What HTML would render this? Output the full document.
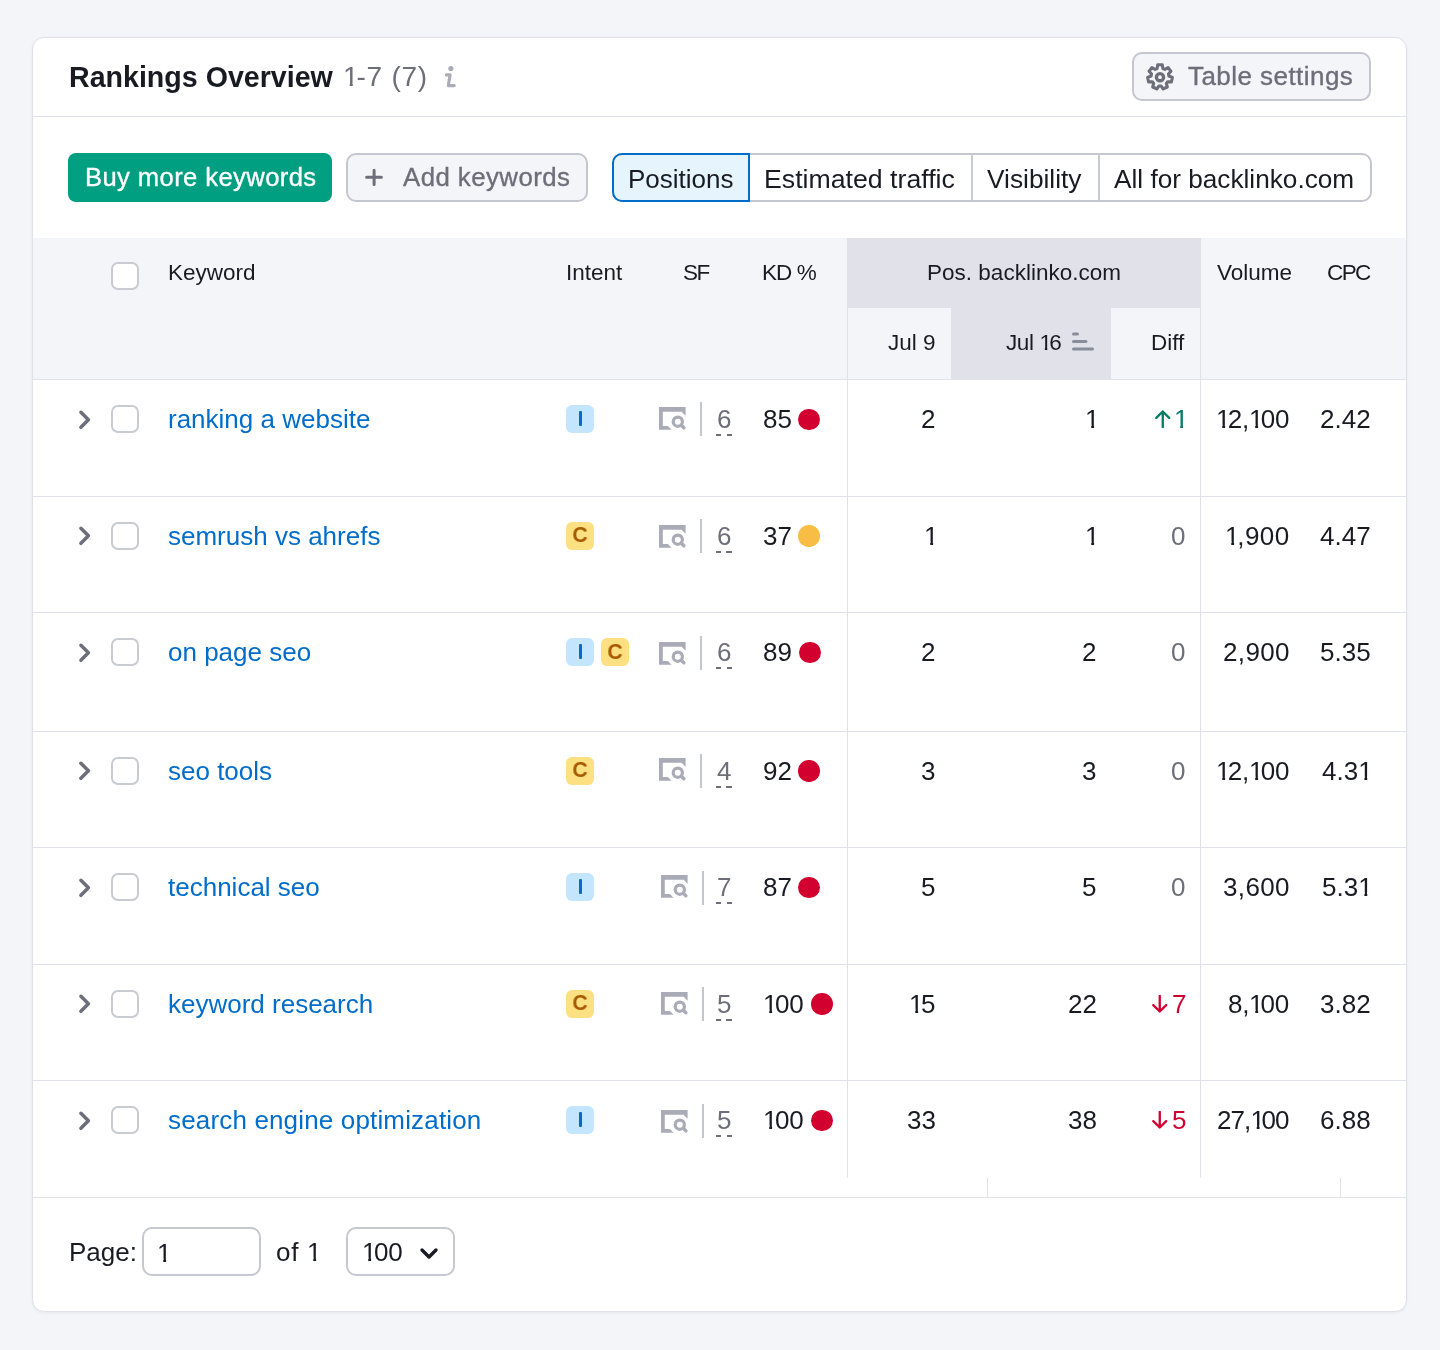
<!DOCTYPE html>
<html><head><meta charset="utf-8"><title>Rankings Overview</title>
<style>
html,body{margin:0;padding:0;}
body{width:1440px;height:1350px;background:#f4f5f9;position:relative;overflow:hidden;font-family:"Liberation Sans",sans-serif;}
.t{position:absolute;white-space:nowrap;will-change:transform;}
.b{position:absolute;}
.o{display:inline-block;margin-right:-0.1em;clip-path:polygon(-1em -1em,2em -1em,2em 0.70em,0.35em 0.70em,0.35em 2em,0.24em 2em,0.24em 0.70em,-1em 0.70em);}
</style></head><body>
<div class="b" style="left:32px;top:37px;width:1375px;height:1275px;background:#fff;border:1px solid #e0e1e9;border-radius:12px;box-sizing:border-box;box-shadow:0 1px 3px rgba(25,27,35,0.06);"></div>
<div class="t" style="left:69.00px;top:62.78px;font-size:28.6px;line-height:28.6px;color:#191b23;font-weight:700;">Rankings Overview</div>
<div class="t" style="left:343.00px;top:63.29px;font-size:28px;line-height:28px;color:#6c6e79;letter-spacing:0.75px;"><span class="o">1</span>-7 (7)</div>
<svg class="b" style="left:443px;top:64px" width="16" height="26" viewBox="0 0 16 26"><circle cx="7.9" cy="4.5" r="2.6" fill="#a9abb6"/><path d="M3.4 10.9 H7.1 L5.3 21.6 H11.2" fill="none" stroke="#a9abb6" stroke-width="3.1" stroke-linejoin="round" stroke-linecap="round"/></svg>
<div class="b" style="left:1132px;top:52px;width:239px;height:49px;background:#f4f5f9;border:2px solid #c4c7cf;border-radius:10px;box-sizing:border-box;"></div>
<svg class="b" style="left:1145.3px;top:61.7px" width="30" height="30" viewBox="0 0 30 30"><path d="M12.07 6.49 L12.74 2.81 L17.26 2.81 L17.93 6.49 L19.83 7.40 L23.12 5.63 L25.94 9.16 L23.48 11.99 L23.95 14.04 L27.39 15.51 L26.38 19.92 L22.64 19.75 L21.33 21.40 L22.33 25.00 L18.25 26.97 L16.05 23.94 L13.95 23.94 L11.75 26.97 L7.67 25.00 L8.67 21.40 L7.36 19.75 L3.62 19.92 L2.61 15.51 L6.05 14.04 L6.52 11.99 L4.06 9.16 L6.88 5.63 L10.17 7.40 Z" fill="none" stroke="#6c6e79" stroke-width="3.1" stroke-linejoin="round"/><circle cx="15" cy="15.2" r="3.6" fill="none" stroke="#6c6e79" stroke-width="3.4"/></svg>
<div class="t" style="left:1188.30px;top:63.49px;font-size:26px;line-height:26px;color:#6c6e79;-webkit-text-stroke:0.35px #6c6e79;letter-spacing:0.45px;">Table settings</div>
<div class="b" style="left:33px;top:116px;width:1373px;height:1px;background:#e0e1e9;"></div>
<div class="b" style="left:68px;top:153px;width:264px;height:49px;background:#009f81;border-radius:8px;"></div>
<div class="t" style="left:84.80px;top:164.82px;font-size:25.6px;line-height:25.6px;color:#fff;-webkit-text-stroke:0.35px #fff;letter-spacing:0.4px;">Buy more keywords</div>
<div class="b" style="left:346px;top:153px;width:242px;height:49px;background:#f4f5f9;border:2px solid #c4c7cf;border-radius:10px;box-sizing:border-box;"></div>
<svg class="b" style="left:364px;top:168px" width="20" height="20" viewBox="0 0 20 20"><path d="M10.1 2.3 V16.4 M2.6 9.3 H17.4" stroke="#6c6e79" stroke-width="3" stroke-linecap="round"/></svg>
<div class="t" style="left:403.30px;top:164.66px;font-size:25.8px;line-height:25.8px;color:#6c6e79;-webkit-text-stroke:0.35px #6c6e79;letter-spacing:0.45px;">Add keywords</div>
<div class="b" style="left:612px;top:153px;width:760px;height:49px;background:#fff;border:2px solid #c4c7cf;border-radius:10px;box-sizing:border-box;"></div>
<div class="b" style="left:971px;top:154px;width:2px;height:47px;background:#c9cbd2;"></div>
<div class="b" style="left:1098px;top:154px;width:2px;height:47px;background:#c9cbd2;"></div>
<div class="b" style="left:612px;top:153px;width:138px;height:49px;background:#e6f4fd;border:2px solid #006dca;border-radius:10px 0 0 10px;box-sizing:border-box;"></div>
<div class="t" style="left:627.50px;top:165.99px;font-size:26px;line-height:26px;color:#191b23;">Positions</div>
<div class="t" style="left:764.00px;top:165.99px;font-size:26.7px;line-height:26.7px;color:#191b23;">Estimated traffic</div>
<div class="t" style="left:987.00px;top:165.73px;font-size:26.3px;line-height:26.3px;color:#191b23;">Visibility</div>
<div class="t" style="left:1114.00px;top:165.82px;font-size:26.2px;line-height:26.2px;color:#191b23;">All for backlinko.com</div>
<div class="b" style="left:33px;top:238px;width:1373px;height:141px;background:#f4f5f9;"></div>
<div class="b" style="left:848px;top:238px;width:352px;height:70px;background:#e0e1e9;"></div>
<div class="b" style="left:951px;top:308px;width:160px;height:71px;background:#e0e1e9;"></div>
<div class="b" style="left:33px;top:379px;width:1373px;height:1px;background:#e0e1e9;"></div>
<div class="b" style="left:847px;top:238px;width:1px;height:940px;background:#e0e1e9;"></div>
<div class="b" style="left:1200px;top:238px;width:1px;height:940px;background:#e0e1e9;"></div>
<div class="b" style="left:987px;top:1178px;width:1px;height:19px;background:#e0e1e9;"></div>
<div class="b" style="left:1340px;top:1178px;width:1px;height:19px;background:#e0e1e9;"></div>
<div class="b" style="left:111px;top:262px;width:28px;height:28px;background:#fff;border:2px solid #c9cbd2;border-radius:7px;box-sizing:border-box;"></div>
<div class="t" style="left:167.60px;top:261.95px;font-size:22.5px;line-height:22.5px;color:#191b23;">Keyword</div>
<div class="t" style="left:566.00px;top:261.95px;font-size:22.5px;line-height:22.5px;color:#191b23;">Intent</div>
<div class="t" style="left:682.50px;top:261.95px;font-size:22.5px;line-height:22.5px;color:#191b23;letter-spacing:-1.5px;">SF</div>
<div class="t" style="left:762.00px;top:261.95px;font-size:22.5px;line-height:22.5px;color:#191b23;letter-spacing:-0.9px;">KD %</div>
<div class="t" style="left:1024.00px;top:261.95px;font-size:22.5px;line-height:22.5px;color:#191b23;transform:translateX(-50%);">Pos. backlinko.com</div>
<div class="t" style="left:1216.50px;top:261.95px;font-size:22.5px;line-height:22.5px;color:#191b23;">Volume</div>
<div class="t" style="left:1327.00px;top:261.95px;font-size:22.5px;line-height:22.5px;color:#191b23;letter-spacing:-1.6px;">CPC</div>
<div class="t" style="right:504.50px;top:332.15px;font-size:22.5px;line-height:22.5px;color:#191b23;">Jul 9</div>
<div class="t" style="right:379.00px;top:332.15px;font-size:22.5px;line-height:22.5px;color:#191b23;letter-spacing:-0.4px;">Jul <span class="o">1</span>6</div>
<div class="t" style="right:255.50px;top:332.15px;font-size:22.5px;line-height:22.5px;color:#191b23;">Diff</div>
<svg class="b" style="left:1072px;top:332px" width="22" height="19" viewBox="0 0 22 19"><path d="M1.5 2 H5.5 M1.5 9.5 H14 M1.5 17 H20.5" stroke="#898d9a" stroke-width="3" stroke-linecap="round"/></svg>
<div class="b" style="left:33px;top:496px;width:1373px;height:1px;background:#e0e1e9;"></div>
<div class="b" style="left:33px;top:612px;width:1373px;height:1px;background:#e0e1e9;"></div>
<div class="b" style="left:33px;top:731px;width:1373px;height:1px;background:#e0e1e9;"></div>
<div class="b" style="left:33px;top:847px;width:1373px;height:1px;background:#e0e1e9;"></div>
<div class="b" style="left:33px;top:964px;width:1373px;height:1px;background:#e0e1e9;"></div>
<div class="b" style="left:33px;top:1080px;width:1373px;height:1px;background:#e0e1e9;"></div>
<svg class="b" style="left:77px;top:408.5px" width="15" height="21" viewBox="0 0 15 21"><path d="M3.9 3.3 L11.4 10.8 L3.9 18.3" fill="none" stroke="#6c6e79" stroke-width="3.5" stroke-linecap="round" stroke-linejoin="round"/></svg>
<div class="b" style="left:111px;top:405px;width:28px;height:28px;background:#fff;border:2px solid #c9cbd2;border-radius:7px;box-sizing:border-box;"></div>
<div class="t" style="left:167.60px;top:405.99px;font-size:26px;line-height:26px;color:#006dca;">ranking a website</div>
<div class="b" style="left:566px;top:405px;width:28px;height:28px;background:#c4e5fe;border-radius:6px;"></div>
<div class="b" style="left:578.5px;top:410.5px;width:3.6px;height:15px;background:#006dca;border-radius:1px;"></div>
<svg class="b" style="left:659px;top:406.9px" width="28" height="24" viewBox="0 0 28 24"><path d="M0 0 H26.6 V8.8 L23 5.2 V4.8 H3.8 V19.1 H8.8 L12.6 22.8 H0 Z" fill="#a9abb6"/><circle cx="18.8" cy="14.7" r="4.6" fill="none" stroke="#a9abb6" stroke-width="3.2"/><path d="M22.3 18.2 L24.9 20.8" stroke="#a9abb6" stroke-width="3.4" stroke-linecap="round"/></svg>
<div class="b" style="left:700px;top:402px;width:1.5px;height:34px;background:#c4c7cf;"></div>
<div class="t" style="right:709.00px;top:405.99px;font-size:26px;line-height:26px;color:#6c6e79;">6</div>
<div class="b" style="left:716px;top:434.0px;width:16px;height:2px;background:repeating-linear-gradient(90deg,#6c6e79 0 5px,transparent 5px 10.5px);"></div>
<div class="t" style="left:762.50px;top:405.99px;font-size:26px;line-height:26px;color:#191b23;">85</div>
<div class="b" style="left:798.4px;top:408.5px;width:21.5px;height:21.5px;border-radius:50%;background:#d1002f;"></div>
<div class="t" style="right:504.50px;top:405.99px;font-size:26px;line-height:26px;color:#191b23;">2</div>
<div class="t" style="right:343.50px;top:405.99px;font-size:26px;line-height:26px;color:#191b23;"><span class="o">1</span></div>
<div class="t" style="right:254.00px;top:405.99px;font-size:26px;line-height:26px;color:#007c65;"><span class="o">1</span></div>
<svg class="b" style="left:1154.5px;top:409.8px" width="16" height="18" viewBox="0 0 16 18"><path d="M7.75 17.2 V1.5 M1.3 7.9 L7.75 1.5 L14.2 7.9" fill="none" stroke="#007c65" stroke-width="2.3" stroke-linecap="round" stroke-linejoin="round"/></svg>
<div class="t" style="right:150.70px;top:405.99px;font-size:26px;line-height:26px;color:#191b23;letter-spacing:-0.2px;"><span class="o">1</span>2,<span class="o">1</span>00</div>
<div class="t" style="right:69.50px;top:405.99px;font-size:26px;line-height:26px;color:#191b23;">2.42</div>
<svg class="b" style="left:77px;top:525.4px" width="15" height="21" viewBox="0 0 15 21"><path d="M3.9 3.3 L11.4 10.8 L3.9 18.3" fill="none" stroke="#6c6e79" stroke-width="3.5" stroke-linecap="round" stroke-linejoin="round"/></svg>
<div class="b" style="left:111px;top:522px;width:28px;height:28px;background:#fff;border:2px solid #c9cbd2;border-radius:7px;box-sizing:border-box;"></div>
<div class="t" style="left:167.60px;top:522.89px;font-size:26px;line-height:26px;color:#006dca;">semrush vs ahrefs</div>
<div class="b" style="left:566px;top:522px;width:28px;height:28px;background:#fce081;border-radius:6px;"></div>
<div class="t" style="left:580.20px;top:524.25px;font-size:22.5px;line-height:22.5px;color:#a85a00;font-weight:700;transform:translateX(-50%) scaleX(0.94);">C</div>
<svg class="b" style="left:659px;top:525.1px" width="28" height="24" viewBox="0 0 28 24"><path d="M0 0 H26.6 V8.8 L23 5.2 V4.8 H3.8 V19.1 H8.8 L12.6 22.8 H0 Z" fill="#a9abb6"/><circle cx="18.8" cy="14.7" r="4.6" fill="none" stroke="#a9abb6" stroke-width="3.2"/><path d="M22.3 18.2 L24.9 20.8" stroke="#a9abb6" stroke-width="3.4" stroke-linecap="round"/></svg>
<div class="b" style="left:700px;top:519px;width:1.5px;height:34px;background:#c4c7cf;"></div>
<div class="t" style="right:709.00px;top:522.89px;font-size:26px;line-height:26px;color:#6c6e79;">6</div>
<div class="b" style="left:716px;top:550.9px;width:16px;height:2px;background:repeating-linear-gradient(90deg,#6c6e79 0 5px,transparent 5px 10.5px);"></div>
<div class="t" style="left:762.50px;top:522.89px;font-size:26px;line-height:26px;color:#191b23;">37</div>
<div class="b" style="left:798.4px;top:525.4px;width:21.5px;height:21.5px;border-radius:50%;background:#f7bd45;"></div>
<div class="t" style="right:504.50px;top:522.89px;font-size:26px;line-height:26px;color:#191b23;"><span class="o">1</span></div>
<div class="t" style="right:343.50px;top:522.89px;font-size:26px;line-height:26px;color:#191b23;"><span class="o">1</span></div>
<div class="t" style="right:255.00px;top:522.89px;font-size:26px;line-height:26px;color:#6c6e79;">0</div>
<div class="t" style="right:150.08px;top:522.89px;font-size:26px;line-height:26px;color:#191b23;letter-spacing:0.425px;"><span class="o">1</span>,900</div>
<div class="t" style="right:69.50px;top:522.89px;font-size:26px;line-height:26px;color:#191b23;">4.47</div>
<svg class="b" style="left:77px;top:641.7px" width="15" height="21" viewBox="0 0 15 21"><path d="M3.9 3.3 L11.4 10.8 L3.9 18.3" fill="none" stroke="#6c6e79" stroke-width="3.5" stroke-linecap="round" stroke-linejoin="round"/></svg>
<div class="b" style="left:111px;top:638px;width:28px;height:28px;background:#fff;border:2px solid #c9cbd2;border-radius:7px;box-sizing:border-box;"></div>
<div class="t" style="left:167.60px;top:639.19px;font-size:26px;line-height:26px;color:#006dca;">on page seo</div>
<div class="b" style="left:566px;top:638px;width:28px;height:28px;background:#c4e5fe;border-radius:6px;"></div>
<div class="b" style="left:578.5px;top:643.5px;width:3.6px;height:15px;background:#006dca;border-radius:1px;"></div>
<div class="b" style="left:601px;top:638px;width:28px;height:28px;background:#fce081;border-radius:6px;"></div>
<div class="t" style="left:615.20px;top:640.55px;font-size:22.5px;line-height:22.5px;color:#a85a00;font-weight:700;transform:translateX(-50%) scaleX(0.94);">C</div>
<svg class="b" style="left:659px;top:641.9px" width="28" height="24" viewBox="0 0 28 24"><path d="M0 0 H26.6 V8.8 L23 5.2 V4.8 H3.8 V19.1 H8.8 L12.6 22.8 H0 Z" fill="#a9abb6"/><circle cx="18.8" cy="14.7" r="4.6" fill="none" stroke="#a9abb6" stroke-width="3.2"/><path d="M22.3 18.2 L24.9 20.8" stroke="#a9abb6" stroke-width="3.4" stroke-linecap="round"/></svg>
<div class="b" style="left:700px;top:636px;width:1.5px;height:34px;background:#c4c7cf;"></div>
<div class="t" style="right:709.00px;top:639.19px;font-size:26px;line-height:26px;color:#6c6e79;">6</div>
<div class="b" style="left:716px;top:667.2px;width:16px;height:2px;background:repeating-linear-gradient(90deg,#6c6e79 0 5px,transparent 5px 10.5px);"></div>
<div class="t" style="left:762.50px;top:639.19px;font-size:26px;line-height:26px;color:#191b23;">89</div>
<div class="b" style="left:799.2px;top:641.7px;width:21.5px;height:21.5px;border-radius:50%;background:#d1002f;"></div>
<div class="t" style="right:504.50px;top:639.19px;font-size:26px;line-height:26px;color:#191b23;">2</div>
<div class="t" style="right:343.50px;top:639.19px;font-size:26px;line-height:26px;color:#191b23;">2</div>
<div class="t" style="right:255.00px;top:639.19px;font-size:26px;line-height:26px;color:#6c6e79;">0</div>
<div class="t" style="right:150.12px;top:639.19px;font-size:26px;line-height:26px;color:#191b23;letter-spacing:0.375px;">2,900</div>
<div class="t" style="right:69.50px;top:639.19px;font-size:26px;line-height:26px;color:#191b23;">5.35</div>
<svg class="b" style="left:77px;top:760.3px" width="15" height="21" viewBox="0 0 15 21"><path d="M3.9 3.3 L11.4 10.8 L3.9 18.3" fill="none" stroke="#6c6e79" stroke-width="3.5" stroke-linecap="round" stroke-linejoin="round"/></svg>
<div class="b" style="left:111px;top:757px;width:28px;height:28px;background:#fff;border:2px solid #c9cbd2;border-radius:7px;box-sizing:border-box;"></div>
<div class="t" style="left:167.60px;top:757.79px;font-size:26px;line-height:26px;color:#006dca;">seo tools</div>
<div class="b" style="left:566px;top:757px;width:28px;height:28px;background:#fce081;border-radius:6px;"></div>
<div class="t" style="left:580.20px;top:759.15px;font-size:22.5px;line-height:22.5px;color:#a85a00;font-weight:700;transform:translateX(-50%) scaleX(0.94);">C</div>
<svg class="b" style="left:659px;top:758.2px" width="28" height="24" viewBox="0 0 28 24"><path d="M0 0 H26.6 V8.8 L23 5.2 V4.8 H3.8 V19.1 H8.8 L12.6 22.8 H0 Z" fill="#a9abb6"/><circle cx="18.8" cy="14.7" r="4.6" fill="none" stroke="#a9abb6" stroke-width="3.2"/><path d="M22.3 18.2 L24.9 20.8" stroke="#a9abb6" stroke-width="3.4" stroke-linecap="round"/></svg>
<div class="b" style="left:700px;top:754px;width:1.5px;height:34px;background:#c4c7cf;"></div>
<div class="t" style="right:709.00px;top:757.79px;font-size:26px;line-height:26px;color:#6c6e79;">4</div>
<div class="b" style="left:716px;top:785.8px;width:16px;height:2px;background:repeating-linear-gradient(90deg,#6c6e79 0 5px,transparent 5px 10.5px);"></div>
<div class="t" style="left:762.50px;top:757.79px;font-size:26px;line-height:26px;color:#191b23;">92</div>
<div class="b" style="left:798.4px;top:760.3px;width:21.5px;height:21.5px;border-radius:50%;background:#d1002f;"></div>
<div class="t" style="right:504.50px;top:757.79px;font-size:26px;line-height:26px;color:#191b23;">3</div>
<div class="t" style="right:343.50px;top:757.79px;font-size:26px;line-height:26px;color:#191b23;">3</div>
<div class="t" style="right:255.00px;top:757.79px;font-size:26px;line-height:26px;color:#6c6e79;">0</div>
<div class="t" style="right:150.70px;top:757.79px;font-size:26px;line-height:26px;color:#191b23;letter-spacing:-0.2px;"><span class="o">1</span>2,<span class="o">1</span>00</div>
<div class="t" style="right:69.50px;top:757.79px;font-size:26px;line-height:26px;color:#191b23;">4.3<span class="o">1</span></div>
<svg class="b" style="left:77px;top:876.6px" width="15" height="21" viewBox="0 0 15 21"><path d="M3.9 3.3 L11.4 10.8 L3.9 18.3" fill="none" stroke="#6c6e79" stroke-width="3.5" stroke-linecap="round" stroke-linejoin="round"/></svg>
<div class="b" style="left:111px;top:873px;width:28px;height:28px;background:#fff;border:2px solid #c9cbd2;border-radius:7px;box-sizing:border-box;"></div>
<div class="t" style="left:167.60px;top:874.09px;font-size:26px;line-height:26px;color:#006dca;">technical seo</div>
<div class="b" style="left:566px;top:873px;width:28px;height:28px;background:#c4e5fe;border-radius:6px;"></div>
<div class="b" style="left:578.5px;top:878.5px;width:3.6px;height:15px;background:#006dca;border-radius:1px;"></div>
<svg class="b" style="left:661px;top:875.1px" width="28" height="24" viewBox="0 0 28 24"><path d="M0 0 H26.6 V8.8 L23 5.2 V4.8 H3.8 V19.1 H8.8 L12.6 22.8 H0 Z" fill="#a9abb6"/><circle cx="18.8" cy="14.7" r="4.6" fill="none" stroke="#a9abb6" stroke-width="3.2"/><path d="M22.3 18.2 L24.9 20.8" stroke="#a9abb6" stroke-width="3.4" stroke-linecap="round"/></svg>
<div class="b" style="left:702px;top:871px;width:1.5px;height:34px;background:#c4c7cf;"></div>
<div class="t" style="right:709.00px;top:874.09px;font-size:26px;line-height:26px;color:#6c6e79;">7</div>
<div class="b" style="left:716px;top:902.1px;width:16px;height:2px;background:repeating-linear-gradient(90deg,#6c6e79 0 5px,transparent 5px 10.5px);"></div>
<div class="t" style="left:762.50px;top:874.09px;font-size:26px;line-height:26px;color:#191b23;">87</div>
<div class="b" style="left:798.4px;top:876.6px;width:21.5px;height:21.5px;border-radius:50%;background:#d1002f;"></div>
<div class="t" style="right:504.50px;top:874.09px;font-size:26px;line-height:26px;color:#191b23;">5</div>
<div class="t" style="right:343.50px;top:874.09px;font-size:26px;line-height:26px;color:#191b23;">5</div>
<div class="t" style="right:255.00px;top:874.09px;font-size:26px;line-height:26px;color:#6c6e79;">0</div>
<div class="t" style="right:150.12px;top:874.09px;font-size:26px;line-height:26px;color:#191b23;letter-spacing:0.375px;">3,600</div>
<div class="t" style="right:69.50px;top:874.09px;font-size:26px;line-height:26px;color:#191b23;">5.3<span class="o">1</span></div>
<svg class="b" style="left:77px;top:993.3px" width="15" height="21" viewBox="0 0 15 21"><path d="M3.9 3.3 L11.4 10.8 L3.9 18.3" fill="none" stroke="#6c6e79" stroke-width="3.5" stroke-linecap="round" stroke-linejoin="round"/></svg>
<div class="b" style="left:111px;top:990px;width:28px;height:28px;background:#fff;border:2px solid #c9cbd2;border-radius:7px;box-sizing:border-box;"></div>
<div class="t" style="left:167.60px;top:990.79px;font-size:26px;line-height:26px;color:#006dca;">keyword research</div>
<div class="b" style="left:566px;top:990px;width:28px;height:28px;background:#fce081;border-radius:6px;"></div>
<div class="t" style="left:580.20px;top:992.15px;font-size:22.5px;line-height:22.5px;color:#a85a00;font-weight:700;transform:translateX(-50%) scaleX(0.94);">C</div>
<svg class="b" style="left:661px;top:991.6px" width="28" height="24" viewBox="0 0 28 24"><path d="M0 0 H26.6 V8.8 L23 5.2 V4.8 H3.8 V19.1 H8.8 L12.6 22.8 H0 Z" fill="#a9abb6"/><circle cx="18.8" cy="14.7" r="4.6" fill="none" stroke="#a9abb6" stroke-width="3.2"/><path d="M22.3 18.2 L24.9 20.8" stroke="#a9abb6" stroke-width="3.4" stroke-linecap="round"/></svg>
<div class="b" style="left:702px;top:987px;width:1.5px;height:34px;background:#c4c7cf;"></div>
<div class="t" style="right:709.00px;top:990.79px;font-size:26px;line-height:26px;color:#6c6e79;">5</div>
<div class="b" style="left:716px;top:1018.8px;width:16px;height:2px;background:repeating-linear-gradient(90deg,#6c6e79 0 5px,transparent 5px 10.5px);"></div>
<div class="t" style="left:762.50px;top:990.79px;font-size:26px;line-height:26px;color:#191b23;"><span class="o">1</span>00</div>
<div class="b" style="left:811.0px;top:993.3px;width:21.5px;height:21.5px;border-radius:50%;background:#d1002f;"></div>
<div class="t" style="right:504.50px;top:990.79px;font-size:26px;line-height:26px;color:#191b23;"><span class="o">1</span>5</div>
<div class="t" style="right:343.50px;top:990.79px;font-size:26px;line-height:26px;color:#191b23;">22</div>
<div class="t" style="right:254.00px;top:990.79px;font-size:26px;line-height:26px;color:#d1002f;">7</div>
<svg class="b" style="left:1151.5px;top:994.8px" width="16" height="18" viewBox="0 0 16 18"><path d="M7.75 0.8 V16.5 M1.3 10.1 L7.75 16.5 L14.2 10.1" fill="none" stroke="#d1002f" stroke-width="2.3" stroke-linecap="round" stroke-linejoin="round"/></svg>
<div class="t" style="right:150.83px;top:990.79px;font-size:26px;line-height:26px;color:#191b23;letter-spacing:-0.325px;">8,<span class="o">1</span>00</div>
<div class="t" style="right:69.50px;top:990.79px;font-size:26px;line-height:26px;color:#191b23;">3.82</div>
<svg class="b" style="left:77px;top:1109.8px" width="15" height="21" viewBox="0 0 15 21"><path d="M3.9 3.3 L11.4 10.8 L3.9 18.3" fill="none" stroke="#6c6e79" stroke-width="3.5" stroke-linecap="round" stroke-linejoin="round"/></svg>
<div class="b" style="left:111px;top:1106px;width:28px;height:28px;background:#fff;border:2px solid #c9cbd2;border-radius:7px;box-sizing:border-box;"></div>
<div class="t" style="left:167.60px;top:1107.29px;font-size:26px;line-height:26px;color:#006dca;letter-spacing:0.16px;">search engine optimization</div>
<div class="b" style="left:566px;top:1106px;width:28px;height:28px;background:#c4e5fe;border-radius:6px;"></div>
<div class="b" style="left:578.5px;top:1111.5px;width:3.6px;height:15px;background:#006dca;border-radius:1px;"></div>
<svg class="b" style="left:661px;top:1110.1px" width="28" height="24" viewBox="0 0 28 24"><path d="M0 0 H26.6 V8.8 L23 5.2 V4.8 H3.8 V19.1 H8.8 L12.6 22.8 H0 Z" fill="#a9abb6"/><circle cx="18.8" cy="14.7" r="4.6" fill="none" stroke="#a9abb6" stroke-width="3.2"/><path d="M22.3 18.2 L24.9 20.8" stroke="#a9abb6" stroke-width="3.4" stroke-linecap="round"/></svg>
<div class="b" style="left:702px;top:1104px;width:1.5px;height:34px;background:#c4c7cf;"></div>
<div class="t" style="right:709.00px;top:1107.29px;font-size:26px;line-height:26px;color:#6c6e79;">5</div>
<div class="b" style="left:716px;top:1135.3px;width:16px;height:2px;background:repeating-linear-gradient(90deg,#6c6e79 0 5px,transparent 5px 10.5px);"></div>
<div class="t" style="left:762.50px;top:1107.29px;font-size:26px;line-height:26px;color:#191b23;"><span class="o">1</span>00</div>
<div class="b" style="left:811.0px;top:1109.8px;width:21.5px;height:21.5px;border-radius:50%;background:#d1002f;"></div>
<div class="t" style="right:504.50px;top:1107.29px;font-size:26px;line-height:26px;color:#191b23;">33</div>
<div class="t" style="right:343.50px;top:1107.29px;font-size:26px;line-height:26px;color:#191b23;">38</div>
<div class="t" style="right:254.00px;top:1107.29px;font-size:26px;line-height:26px;color:#d1002f;">5</div>
<svg class="b" style="left:1151.5px;top:1111.3px" width="16" height="18" viewBox="0 0 16 18"><path d="M7.75 0.8 V16.5 M1.3 10.1 L7.75 16.5 L14.2 10.1" fill="none" stroke="#d1002f" stroke-width="2.3" stroke-linecap="round" stroke-linejoin="round"/></svg>
<div class="t" style="right:151.40px;top:1107.29px;font-size:26px;line-height:26px;color:#191b23;letter-spacing:-0.9px;">27,<span class="o">1</span>00</div>
<div class="t" style="right:69.50px;top:1107.29px;font-size:26px;line-height:26px;color:#191b23;">6.88</div>
<div class="b" style="left:33px;top:1197px;width:1373px;height:1px;background:#e0e1e9;"></div>
<div class="t" style="left:69.00px;top:1238.99px;font-size:26px;line-height:26px;color:#191b23;">Page:</div>
<div class="b" style="left:142px;top:1227px;width:119px;height:49px;background:#fff;border:2px solid #c6c8cf;border-radius:10px;box-sizing:border-box;"></div>
<div class="t" style="left:157.00px;top:1239.99px;font-size:26px;line-height:26px;color:#191b23;"><span class="o">1</span></div>
<div class="t" style="left:276.00px;top:1238.99px;font-size:26px;line-height:26px;color:#191b23;letter-spacing:0.7px;">of <span class="o">1</span></div>
<div class="b" style="left:346px;top:1227px;width:109px;height:49px;background:#fff;border:2px solid #c6c8cf;border-radius:10px;box-sizing:border-box;"></div>
<div class="t" style="left:362.00px;top:1238.99px;font-size:26px;line-height:26px;color:#191b23;"><span class="o">1</span>00</div>
<svg class="b" style="left:418px;top:1246px" width="22" height="15" viewBox="0 0 22 15"><path d="M4 4 L11 11 L18 4" fill="none" stroke="#191b23" stroke-width="3.4" stroke-linecap="round" stroke-linejoin="round"/></svg>
</body></html>
